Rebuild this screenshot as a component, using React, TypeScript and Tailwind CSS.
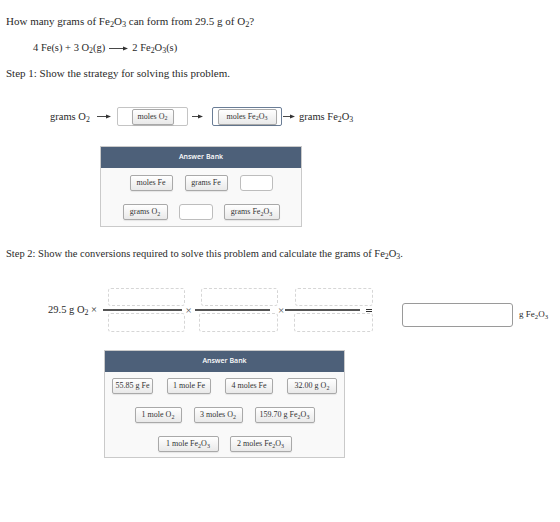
import React from "react";

function Arrow({ w }: { w: number }) {
  return (
    <svg width={w} height={7} viewBox={`0 0 ${w} 7`} className="shrink-0">
      <line x1="0" y1="3.5" x2={w - 4} y2="3.5" stroke="#333" strokeWidth="0.9" />
      <polygon points={`${w - 5},1.4 ${w},3.5 ${w - 5},5.6`} fill="#333" />
    </svg>
  );
}

function Chip({ className, children }: { className: string; children?: React.ReactNode }) {
  return (
    <div
      className={`flex h-[16px] shrink-0 items-center justify-center whitespace-nowrap rounded-[2px] border border-[#a9a9a9] bg-linear-to-b from-white to-[#e9e9e9] text-[8px] leading-none text-[#333] shadow-[0_1px_1px_rgba(0,0,0,0.08)] ${className}`}
    >
      {children}
    </div>
  );
}

function Slot({ className }: { className: string }) {
  return <div className={`h-[16px] shrink-0 rounded-[3px] border border-[#bdbdbd] bg-white ${className}`} />;
}

function BankHeader() {
  return (
    <div className="flex h-[21px] items-center justify-center bg-[#4d6079] font-['Open_Sans',sans-serif] text-[7px] font-semibold text-white">
      Answer Bank
    </div>
  );
}

function Box({ className }: { className: string }) {
  return <div className={`rounded-[3px] border border-dashed border-[#d6d6d6] bg-white ${className}`} />;
}

export default function App() {
  return (
    <div className="flex h-[522px] w-[560px] flex-col bg-white font-['Liberation_Serif',serif] text-[#2a2a2a]">
      <p className="ml-[6px] mt-[14px] h-[14px] text-[11px] leading-[14px]">
        How many grams of Fe<sub>2</sub>O<sub>3</sub> can form from 29.5 g of O<sub>2</sub>?
      </p>

      <div className="ml-[33px] mt-[13px] flex h-[14px] items-center text-[10.5px] leading-[14px]">
        <span>
          4 Fe(s) + 3 O<sub>2</sub>(g)
        </span>
        <span className="mx-[4px]">
          <Arrow w={19} />
        </span>
        <span>
          2 Fe<sub>2</sub>O<sub>3</sub>(s)
        </span>
      </div>

      <p className="ml-[6px] mt-[11px] h-[14px] text-[11px] leading-[14px]">
        Step 1: Show the strategy for solving this problem.
      </p>

      {/* strategy row */}
      <div className="ml-[50px] mt-[27px] flex h-[19px] items-center text-[10.5px]">
        <span className="w-[47px] whitespace-nowrap">
          grams O<sub>2</sub>
        </span>
        <Arrow w={14} />
        <div className="ml-[6px] flex h-[19px] w-[71px] items-center justify-center rounded-[2px] border border-[#c4c4c4] bg-white">
          <Chip className="h-[14px] w-[42px] text-[7.5px]">
            moles O<sub>2</sub>
          </Chip>
        </div>
        <span className="ml-[4px]">
          <Arrow w={11} />
        </span>
        <div className="ml-[9px] flex h-[19px] w-[70px] items-center justify-center rounded-[2px] border-[1.5px] border-[#6a7d96] bg-white">
          <Chip className="h-[14px] w-[59px] text-[7.5px]">
            moles Fe<sub>2</sub>O<sub>3</sub>
          </Chip>
        </div>
        <span className="ml-[1px]">
          <Arrow w={12} />
        </span>
        <span className="ml-[4px] whitespace-nowrap">
          grams Fe<sub>2</sub>O<sub>3</sub>
        </span>
      </div>

      {/* first answer bank */}
      <div className="ml-[100px] mt-[20px] w-[202px] border border-[#cacaca] bg-[#f9f9f9]">
        <BankHeader />
        <div className="flex flex-col gap-[13px] pb-[6px] pt-[7px]">
          <div className="flex justify-center gap-[12px]">
            <Chip className="w-[43px]">moles Fe</Chip>
            <Chip className="w-[43px]">grams Fe</Chip>
            <Slot className="w-[33px]" />
          </div>
          <div className="flex justify-center gap-[11px]">
            <Chip className="w-[45px]">
              grams O<sub>2</sub>
            </Chip>
            <Slot className="w-[34px]" />
            <Chip className="w-[56px]">
              grams Fe<sub>2</sub>O<sub>3</sub>
            </Chip>
          </div>
        </div>
      </div>

      <p className="ml-[6px] mt-[20px] h-[14px] text-[10.5px] leading-[14px]">
        Step 2: Show the conversions required to solve this problem and calculate the grams of Fe<sub>2</sub>O
        <sub>3</sub>.
      </p>

      {/* conversion row */}
      <div className="ml-[48px] mt-[27px] flex h-[44px] items-center text-[10.5px]">
        <span className="w-[55px] whitespace-nowrap">
          29.5 g O<sub>2</sub> ×
        </span>

        <div className="flex w-[82px] flex-col">
          <Box className="ml-[5px] h-[18px] w-[77px]" />
          <div className="mt-[3px] h-[1.5px] w-[79px] bg-[#555]" />
          <Box className="ml-[5px] mt-[2px] h-[19px] w-[77px]" />
        </div>
        <span className="w-[7px] text-center text-[11px] leading-none text-[#555]">×</span>

        <div className="ml-[3px] flex w-[83px] flex-col">
          <Box className="ml-[6px] h-[18px] w-[77px]" />
          <div className="mt-[3px] h-[1.5px] w-[75px] bg-[#555]" />
          <Box className="ml-[4px] mt-[2px] h-[19px] w-[79px]" />
        </div>
        <span className="w-[6px] text-center text-[11px] leading-none text-[#555]">×</span>

        <div className="ml-[1px] flex w-[88px] flex-col">
          <Box className="ml-[10px] h-[18px] w-[78px]" />
          <div className="mt-[3px] flex h-[1.5px] items-center">
            <div className="h-[1.5px] w-[75px] bg-[#555]" />
            <div className="ml-[6px] h-[3px] w-[6px] border-y border-[#333]" />
          </div>
          <Box className="ml-[9px] mt-[2px] h-[19px] w-[79px]" />
        </div>

        <div className="ml-[29px] mt-[15px] h-[24px] w-[111px] self-start rounded-[3px] border border-[#9a9a9a] bg-white" />
        <span className="ml-[6px] mt-[20px] self-start whitespace-nowrap text-[9px] leading-[12px]">
          g Fe<sub>2</sub>O<sub>3</sub>
        </span>
      </div>

      {/* second answer bank */}
      <div className="ml-[104px] mt-[18px] w-[241px] border border-[#cacaca] bg-[#f9f9f9]">
        <BankHeader />
        <div className="flex flex-col gap-[13px] pb-[5px] pt-[6px]">
          <div className="flex justify-center gap-[14px]">
            <Chip className="w-[41px]">55.85 g Fe</Chip>
            <Chip className="w-[44px]">1 mole Fe</Chip>
            <Chip className="w-[48px]">4 moles Fe</Chip>
            <Chip className="w-[50px]">
              32.00 g O<sub>2</sub>
            </Chip>
          </div>
          <div className="flex justify-center gap-[12px]">
            <Chip className="w-[47px]">
              1 mole O<sub>2</sub>
            </Chip>
            <Chip className="w-[49px]">
              3 moles O<sub>2</sub>
            </Chip>
            <Chip className="w-[60px]">
              159.70 g Fe<sub>2</sub>O<sub>3</sub>
            </Chip>
          </div>
          <div className="flex justify-center gap-[11px]">
            <Chip className="w-[61px]">
              1 mole Fe<sub>2</sub>O<sub>3</sub>
            </Chip>
            <Chip className="w-[62px]">
              2 moles Fe<sub>2</sub>O<sub>3</sub>
            </Chip>
          </div>
        </div>
      </div>
    </div>
  );
}
